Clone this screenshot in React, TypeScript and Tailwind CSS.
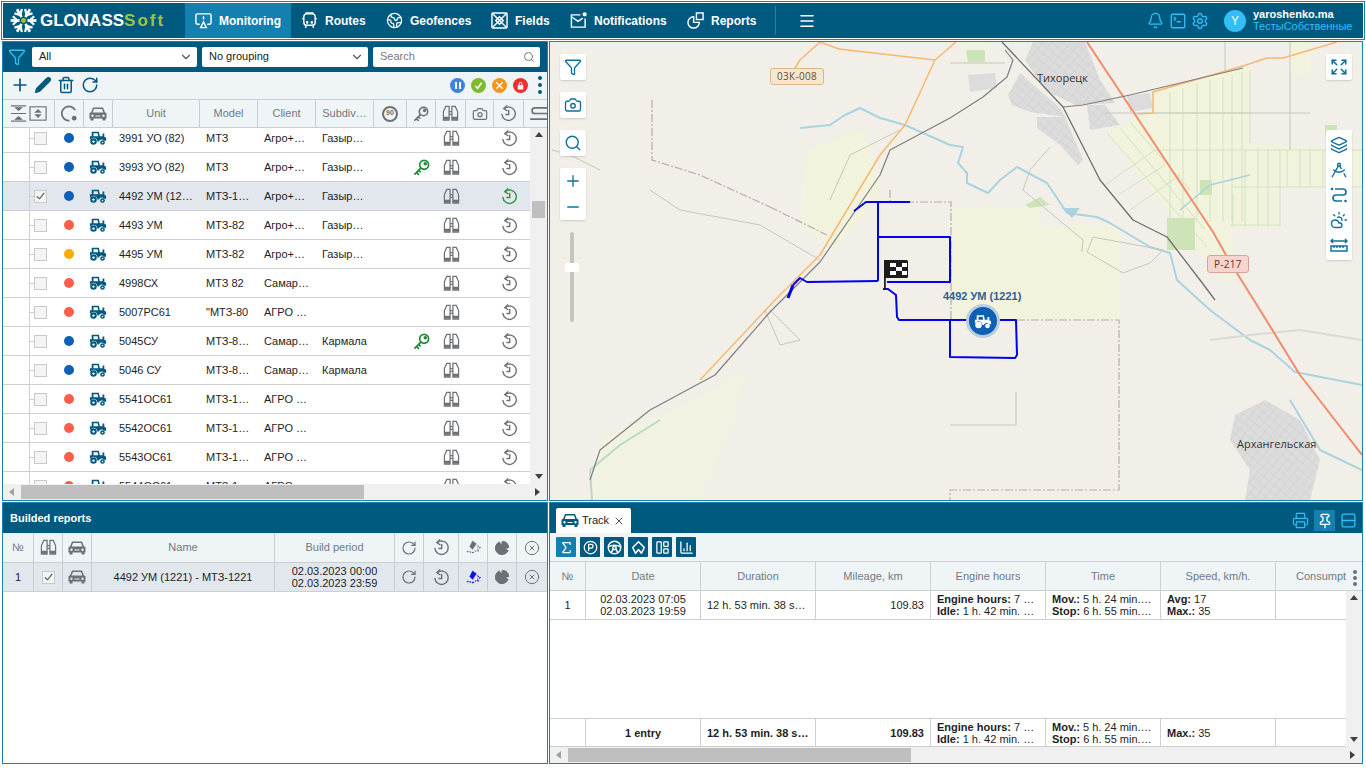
import type { ReactNode } from "react";
import {
  Bell,
  Camera,
  ChartColumn,
  ChartPie,
  ChevronDown,
  CircleParking,
  CircleX,
  CloudSun,
  DraftingCompass,
  Earth,
  Expand,
  Funnel,
  Layers,
  LayoutPanelLeft,
  Menu,
  Minus,
  Pencil,
  Pin,
  Plus,
  Printer,
  RotateCw,
  Rows2,
  Search,
  Settings,
  Sigma,
  SquareTerminal,
  Trash2,
  X,
} from "lucide-react";

const units = [
  { name: "3991 УО (82)", model: "МТЗ", client: "Агро+…", sub: "Газыр…", dot: "bg-[#0f5fb5]" },
  { name: "3993 УО (82)", model: "МТЗ", client: "Агро+…", sub: "Газыр…", dot: "bg-[#0f5fb5]", key: true },
  { name: "4492 УМ (12…", model: "МТЗ-1…", client: "Агро+…", sub: "Газыр…", dot: "bg-[#0f5fb5]", selected: true },
  { name: "4493 УМ", model: "МТЗ-82", client: "Агро+…", sub: "Газыр…", dot: "bg-[#fb5f4a]" },
  { name: "4495 УМ", model: "МТЗ-82", client: "Агро+…", sub: "Газыр…", dot: "bg-[#fbaa00]" },
  { name: "4998СХ", model: "МТЗ 82", client: "Самар…", sub: "", dot: "bg-[#fb5f4a]" },
  { name: "5007РС61", model: "\"МТЗ-80", client: "АГРО …", sub: "", dot: "bg-[#fb5f4a]" },
  { name: "5045СУ", model: "МТЗ-8…", client: "Самар…", sub: "Кармала", dot: "bg-[#0f5fb5]", key: true },
  { name: "5046 СУ", model: "МТЗ-8…", client: "Самар…", sub: "Кармала", dot: "bg-[#0f5fb5]" },
  { name: "5541ОС61", model: "МТЗ-1…", client: "АГРО …", sub: "", dot: "bg-[#fb5f4a]" },
  { name: "5542ОС61", model: "МТЗ-1…", client: "АГРО …", sub: "", dot: "bg-[#fb5f4a]" },
  { name: "5543ОС61", model: "МТЗ-1…", client: "АГРО …", sub: "", dot: "bg-[#fb5f4a]" },
  { name: "5544ОС61", model: "МТЗ-1…", client: "АГРО …", sub: "", dot: "bg-[#fb5f4a]" },
];

function TractorIcon({ className = "" }: { className?: string }) {
  return (
    <svg viewBox="0 0 20 16" className={className} fill="currentColor">
      <path d="M3 1h8l1 5h3V3h2v3.600l2 1.200V11h-2.500a3.200 3.200 0 0 0-5.600 1H9.400a4.200 4.200 0 0 0-7.600-2.400H1V6h2V1zm2 1.600V6h5.200l-.6-3.400H5z" />
      <circle cx="5" cy="12" r="3.600" />
      <circle cx="5" cy="12" r="1.300" fill="#fff" />
      <circle cx="15" cy="13" r="2.600" />
      <circle cx="15" cy="13" r="0.900" fill="#fff" />
    </svg>
  );
}

function BinocularsIcon() {
  return (
    <svg viewBox="0 0 18 18" className="h-[17px] w-[17px] text-[#6d7175]" fill="none" stroke="currentColor" strokeWidth="1.300">
      <path d="M4 1.500h3.500V16H1.500V7z" />
      <path d="M14 1.500h-3.500V16h6V7z" />
      <path d="M7.500 7h3M7.500 10h3" />
      <path d="M1.500 14h6M10.500 14h6" strokeWidth="3" />
    </svg>
  );
}

function KeyIcon({ className }: { className: string }) {
  return (
    <svg viewBox="0 0 18 18" className={className} fill="none" stroke="currentColor" strokeWidth="1.800" strokeLinecap="round">
      <circle cx="11.800" cy="6.200" r="4.700" />
      <circle cx="13" cy="5" r="1" />
      <path d="M8.300 9.700 2 16M3.800 14.200 5.800 16.200M6 12l1.600 1.600" />
    </svg>
  );
}

function HistoryIcon({ className = "text-[#6d7175]" }: { className?: string }) {
  return (
    <svg viewBox="0 0 16 16" className={`h-[17px] w-[17px] ${className}`} fill="none" stroke="currentColor" strokeWidth="1.300" strokeLinecap="round">
      <path d="M4 3.400A6.300 6.300 0 1 1 1.800 8.800" />
      <path d="M6.400 0.800 3.600 3.400 6.600 5.400" />
      <path d="M8.200 5.200V9H5.600" />
    </svg>
  );
}

function CarIcon({ className = "h-[16px] w-[18px] text-[#6d7175]" }: { className?: string }) {
  return (
    <svg viewBox="0 0 18 15" className={className} fill="currentColor">
      <path d="M4 1h10l2 5 1.500.5V12h-1v2h-3v-2H4.500v2h-3v-2h-1V6.500L2 6zm1 1.500L3.700 6h10.600L13 2.500zM3.500 8a1.200 1.200 0 1 0 0 2.400 1.200 1.200 0 0 0 0-2.400zm11 0a1.200 1.200 0 1 0 0 2.400 1.200 1.200 0 0 0 0-2.400zM6.500 9v1h5V9z" fillRule="evenodd" />
    </svg>
  );
}

function WheelIcon({ className }: { className: string }) {
  return (
    <svg viewBox="0 0 18 18" className={className} fill="none" stroke="currentColor" strokeWidth="1.800">
      <circle cx="9" cy="9" r="7.500" />
      <circle cx="9" cy="9.500" r="2" />
      <path d="M2 8c4-2 10-2 14 0M7.500 11 5 15M10.500 11 13 15" />
    </svg>
  );
}

function TurnIcon({ className }: { className: string }) {
  return (
    <svg viewBox="0 0 18 18" className={className} fill="none" stroke="currentColor" strokeWidth="1.800" strokeLinejoin="round">
      <path d="M9 2 16 9l-3.500 7L9 11.500 5.500 16 2 9z" />
    </svg>
  );
}

function Triangle({ dir }: { dir: "up" | "down" | "left" | "right" }) {
  const points = {
    up: "4,1 8,6 0,6",
    down: "0,1 8,1 4,6",
    left: "6,0 6,8 1,4",
    right: "1,0 1,8 6,4",
  };
  return (
    <svg viewBox="0 0 8 8" className="h-2 w-2" fill={dir === "left" ? "#a0a0a0" : "#404040"}>
      <polygon points={points[dir]} />
    </svg>
  );
}

function Check({ checked = false }: { checked?: boolean }) {
  return (
    <span className="flex h-[13px] w-[13px] items-center justify-center border border-[#c9c9c9] bg-[#f4f4f4]">
      {checked && (
        <svg viewBox="0 0 12 12" className="h-3 w-3" fill="none" stroke="#555" strokeWidth="1.200">
          <path d="M2 6.500 5 9l5-6.500" />
        </svg>
      )}
    </span>
  );
}

function Logo() {
  const arms = [30, 90, 150, 210, 270, 330];
  return (
    <div className="flex w-[182px] shrink-0 items-center pl-[7px]">
      <svg viewBox="-12 -12 24 24" className="h-[27px] w-[27px]">
        {arms.map((a) => (
          <g key={a} transform={`rotate(${a})`} stroke="#fff" fill="none">
            <path d="M0-3.500V-11.500" strokeWidth="2.400" />
            <path d="M-3.800-9.500 0-5.500 3.800-9.500" strokeWidth="2" />
          </g>
        ))}
        <circle r="2.200" fill="#9ec43c" />
      </svg>
      <span className="ml-[3px] text-[17px] leading-none font-bold text-white">GLONASS</span>
      <span className="text-[17px] leading-none font-bold tracking-[2px] text-[#9ec43c]">Soft</span>
    </div>
  );
}

function NavItem({ icon, label, active = false, w }: { icon: ReactNode; label: string; active?: boolean; w: string }) {
  return (
    <div className={`flex h-full items-center gap-[7px] pl-[10px] text-[12px] font-bold text-white ${w} ${active ? "bg-[#1480b0]" : ""}`}>
      {icon}
      <span>{label}</span>
    </div>
  );
}

function TopBar() {
  const ic = "h-[17px] w-[17px] shrink-0";
  return (
    <header className="h-[39px] shrink-0 border border-[#1a83ad] p-px">
      <div className="flex h-full bg-[#005a80]">
        <Logo />
        <NavItem w="w-[106px]" active label="Monitoring" icon={
          <svg viewBox="0 0 18 18" className={ic} fill="none" stroke="#fff" strokeWidth="1.500">
            <path d="M5 13H2.500a1.500 1.500 0 0 1-1.500-1.500v-8A1.500 1.500 0 0 1 2.500 2h13A1.500 1.500 0 0 1 17 3.500v8a1.500 1.500 0 0 1-1.500 1.500H13" />
            <path d="M9 4.500V8M6 16.500 9 10.500l3 6z" />
          </svg>
        } />
        <NavItem w="w-[85px]" label="Routes" icon={
          <svg viewBox="0 0 18 18" className={ic} fill="none" stroke="#fff" strokeWidth="1.500">
            <rect x="3" y="2" width="12" height="12" rx="3" />
            <path d="M5.500 2V1h7v1M3 7H1M15 7h2M5 14v3M13 14v3" />
            <circle cx="6.500" cy="11" r=".6" />
            <circle cx="11.500" cy="11" r=".6" />
          </svg>
        } />
        <NavItem w="w-[105px]" label="Geofences" icon={<Earth className={ic} strokeWidth={1.800} />} />
        <NavItem w="w-[79px]" label="Fields" icon={
          <svg viewBox="0 0 18 18" className={ic} fill="none" stroke="#fff" strokeWidth="1.500">
            <rect x="1" y="1" width="16" height="16" rx="1.500" />
            <path d="M1 1l16 16M17 1 1 17M5 9l4-4 4 4-4 4z" />
          </svg>
        } />
        <NavItem w="w-[117px]" label="Notifications" icon={
          <svg viewBox="0 0 18 18" className={ic} fill="none" stroke="#fff" strokeWidth="1.500">
            <path d="M11 3H1.500v13h14.500V7" />
            <path d="m1.500 5 7 5 5-3.500" />
            <circle cx="15.500" cy="2.500" r="1.500" fill="#fff" />
          </svg>
        } />
        <NavItem w="w-[88px]" label="Reports" icon={
          <svg viewBox="0 0 18 18" className={ic} fill="none" stroke="#fff" strokeWidth="1.500">
            <path d="M7 5a6 6 0 1 0 6 6H7z" />
            <rect x="10" y="1" width="7" height="7" />
          </svg>
        } />
        <div className="my-[3px] ml-[10px] w-px bg-[#1a83ad]" />
        <div className="ml-[22px] flex items-center">
          <Menu className="h-[18px] w-[18px] text-white" strokeWidth={2} />
        </div>
        <div className="ml-auto flex items-center text-[#33bff5]">
          <Bell className="h-[17px] w-[17px]" strokeWidth={1.800} />
          <SquareTerminal className="ml-[5px] h-[18px] w-[18px]" strokeWidth={1.800} />
          <Settings className="ml-[4px] h-[18px] w-[18px]" strokeWidth={1.800} />
          <span className="ml-[15px] flex h-[22px] w-[22px] items-center justify-center rounded-full bg-[#33bff5] text-[12px] text-white">Y</span>
          <div className="-mt-[2px] ml-[7px] mr-[10px] w-[100px] text-[11px] leading-[12px]">
            <div className="font-bold text-white">yaroshenko.ma</div>
            <div>ТестыСобственные</div>
          </div>
        </div>
      </div>
    </header>
  );
}

function SelectBox({ label, w }: { label: string; w: string }) {
  return (
    <div className={`flex h-[20px] items-center justify-between rounded-[2px] bg-white pl-[7px] pr-[4px] text-[11px] text-[#222] ${w}`}>
      <span>{label}</span>
      <ChevronDown className="h-[14px] w-[14px] text-[#555]" />
    </div>
  );
}

function HeaderCell({ children, w }: { children: ReactNode; w: string }) {
  return (
    <div className={`flex h-full shrink-0 items-center justify-center border-r border-[#c9ced2] text-[11px] text-[#6f7b82] ${w}`}>
      {children}
    </div>
  );
}

function ScrollBarH({ thumb }: { thumb: string }) {
  return (
    <div className="flex h-[16px] shrink-0 items-center bg-[#f0f0f0]">
      <span className="flex w-[18px] justify-center"><Triangle dir="left" /></span>
      <div className={`h-[14px] bg-[#bfbfbf] ${thumb}`} />
      <span className="ml-auto flex w-[18px] justify-center"><Triangle dir="right" /></span>
    </div>
  );
}

function UnitRow({ unit, first }: { unit: (typeof units)[number]; first: boolean }) {
  return (
    <div className={`flex h-[29px] shrink-0 items-center border-b border-[#cfcfcf] text-[11px] text-[#1e1e1e] ${unit.selected ? "bg-[#e2e7ee]" : "bg-white"} ${first ? "-mt-[4px]" : ""}`}>
      <div className="h-full w-[27px] shrink-0 border-r border-[#cfcfcf]" />
      <div className="flex w-[24px] shrink-0 items-center">
        <span className="h-px w-[4px] bg-[#cfcfcf]" />
        <Check checked={unit.selected} />
      </div>
      <div className="flex w-[29px] shrink-0 justify-center">
        <span className={`h-[10px] w-[10px] rounded-full ${unit.dot}`} />
      </div>
      <div className="flex w-[29px] shrink-0 justify-center">
        <TractorIcon className="h-[16px] w-[18px] text-[#005a80]" />
      </div>
      <div className="w-[88px] shrink-0 pl-[7px]">{unit.name}</div>
      <div className="w-[58px] shrink-0 pl-[6px]">{unit.model}</div>
      <div className="w-[58px] shrink-0 pl-[6px]">{unit.client}</div>
      <div className="w-[58px] shrink-0 pl-[6px]">{unit.sub}</div>
      <div className="w-[33px] shrink-0" />
      <div className="flex w-[29px] shrink-0 justify-center">
        {unit.key && <KeyIcon className="h-[17px] w-[17px] text-[#1f8a3a]" />}
      </div>
      <div className="flex w-[30px] shrink-0 justify-center"><BinocularsIcon /></div>
      <div className="w-[28px] shrink-0" />
      <div className="flex w-[30px] shrink-0 justify-center">
        <HistoryIcon className={unit.selected ? "text-[#2d9140]" : "text-[#6d7175]"} />
      </div>
    </div>
  );
}

function UnitsPanel() {
  return (
    <section className="flex h-[460px] w-[546px] shrink-0 flex-col border border-[#1a83ad]">
      <div className="flex h-[30px] shrink-0 items-center gap-[5px] bg-[#005a80] px-[5px] pb-px">
        <Funnel className="h-[18px] w-[18px] text-[#33bff5]" strokeWidth={1.700} />
        <SelectBox label="All" w="ml-[1px] w-[165px]" />
        <SelectBox label="No grouping" w="w-[166px]" />
        <div className="flex h-[20px] w-[167px] items-center justify-between rounded-[2px] bg-white pl-[7px] pr-[5px] text-[11px] text-[#7a7a7a]">
          <span>Search</span>
          <Search className="h-[12px] w-[12px] text-[#777]" />
        </div>
      </div>
      <div className="flex h-[28px] shrink-0 items-center border-b border-[#c9ced2] bg-[#eff4f7] pb-px pl-[7px] text-[#005a80]">
        <Plus className="h-[20px] w-[20px]" strokeWidth={2} />
        <Pencil className="ml-[4px] h-[18px] w-[18px] fill-[#005a80]" strokeWidth={1.500} />
        <Trash2 className="ml-[5px] h-[18px] w-[18px]" strokeWidth={2} />
        <RotateCw className="ml-[6px] h-[18px] w-[18px]" strokeWidth={2} />
        <div className="ml-auto flex items-center gap-[6px] pr-[5px]">
          <span className="flex h-[15px] w-[15px] items-center justify-center gap-[2px] rounded-full bg-[#3f83e0]">
            <i className="h-[7px] w-[2px] bg-white" /><i className="h-[7px] w-[2px] bg-white" />
          </span>
          <span className="flex h-[15px] w-[15px] items-center justify-center rounded-full bg-[#7ebd29]">
            <svg viewBox="0 0 10 10" className="h-[9px] w-[9px]" fill="none" stroke="#fff" strokeWidth="1.800"><path d="M1.500 5.500 4 8l4.500-6" /></svg>
          </span>
          <span className="flex h-[15px] w-[15px] items-center justify-center rounded-full bg-[#f7931e] text-white">
            <X className="h-[11px] w-[11px]" strokeWidth={3} />
          </span>
          <span className="flex h-[15px] w-[15px] items-center justify-center rounded-full bg-[#ef2f2f]">
            <svg viewBox="0 0 10 10" className="h-[9px] w-[9px]" fill="#fff"><path d="M2 4.500h6V9.500H2zM3 4.500V3a2 2 0 0 1 4 0v1.500H6V3a1 1 0 0 0-2 0v1.500z" /></svg>
          </span>
          <span className="ml-[4px] flex flex-col gap-[3px]">
            <i className="h-[4px] w-[4px] rounded-full bg-[#005a80]" />
            <i className="h-[4px] w-[4px] rounded-full bg-[#005a80]" />
            <i className="h-[4px] w-[4px] rounded-full bg-[#005a80]" />
          </span>
        </div>
      </div>
      <div className="flex h-[28px] shrink-0 items-center border-b border-[#c9ced2] bg-[#eff4f7]">
        <HeaderCell w="w-[52px]">
          <svg viewBox="0 0 40 20" className="h-[19px] w-[40px]" fill="none" stroke="#6d7175" strokeWidth="1.200">
            <path d="M1 2h16M1 18h16M1 10h16" />
            <path d="m6 4 3 2.500L12 4zM6 16l3-2.500L12 16z" fill="#6d7175" />
            <rect x="21" y="3" width="17" height="14" />
            <path d="m27 8.500 2.500-2.500L32 8.500zM27 11.500l2.500 2.500 2.500-2.500z" fill="#6d7175" />
          </svg>
        </HeaderCell>
        <HeaderCell w="w-[29px]">
          <svg viewBox="0 0 18 18" className="h-[17px] w-[17px]" fill="none" stroke="#6d7175" strokeWidth="1.800">
            <path d="M15 5.500A7.500 7.500 0 1 0 9 16.500" />
            <circle cx="14" cy="14" r="2.500" fill="#6d7175" stroke="none" />
          </svg>
        </HeaderCell>
        <HeaderCell w="w-[29px]"><CarIcon /></HeaderCell>
        <HeaderCell w="w-[87px]">Unit</HeaderCell>
        <HeaderCell w="w-[58px]">Model</HeaderCell>
        <HeaderCell w="w-[58px]">Client</HeaderCell>
        <HeaderCell w="w-[58px]">Subdiv…</HeaderCell>
        <HeaderCell w="w-[33px]">
          <span className="flex h-[16px] w-[16px] items-center justify-center rounded-full border-2 border-[#6d7175] text-[7px] font-bold text-[#6d7175]">90</span>
        </HeaderCell>
        <HeaderCell w="w-[29px]"><KeyIcon className="h-[16px] w-[16px] text-[#6d7175]" /></HeaderCell>
        <HeaderCell w="w-[30px]"><BinocularsIcon /></HeaderCell>
        <HeaderCell w="w-[28px]"><Camera className="h-[16px] w-[16px] text-[#6d7175]" strokeWidth={1.800} /></HeaderCell>
        <HeaderCell w="w-[30px]"><HistoryIcon /></HeaderCell>
        <div className="flex h-full grow items-center overflow-hidden pl-[5px]">
          <svg viewBox="0 0 24 16" className="h-[15px] w-[23px] shrink-0" fill="none" stroke="#6d7175" strokeWidth="1.800">
            <path d="M23 2H6a3 3 0 0 0 0 6h12a3 3 0 0 1 0 6H1" />
          </svg>
        </div>
      </div>
      <div className="flex min-h-0 grow">
        <div className="flex min-w-0 grow flex-col overflow-hidden">
          {units.map((u, i) => (
            <UnitRow key={u.name} unit={u} first={i === 0} />
          ))}
        </div>
        <div className="flex w-[17px] shrink-0 flex-col items-center bg-[#f0f0f0]">
          <span className="flex h-[14px] items-center"><Triangle dir="up" /></span>
          <div className="mt-[59px] h-[17px] w-[13px] bg-[#bfbfbf]" />
          <span className="mt-auto flex h-[14px] items-center"><Triangle dir="down" /></span>
        </div>
      </div>
      <ScrollBarH thumb="w-[343px]" />
    </section>
  );
}

function ReportsPanel() {
  const icon = "h-[16px] w-[16px] text-[#6d7175]";
  const cols = ["w-[31px]", "w-[29px]", "w-[29px]", "w-[183px]", "w-[120px]", "w-[29px]", "w-[35px]", "w-[29px]", "w-[29px]", "w-[29px]"];
  const Pie = <ChartPie className={`${icon} fill-[#6d7175]`} strokeWidth={1.500} />;
  const Cross = <CircleX className={icon} strokeWidth={1.500} />;
  const Refresh = <RotateCw className={icon} strokeWidth={1.800} />;
  const trackIcon = (color: string) => (
    <svg viewBox="0 0 18 18" className={`h-[17px] w-[17px] ${color}`} fill="currentColor" stroke="currentColor">
      <path d="m8 2 4 3-4 6-3-3z" strokeWidth=".5" />
      <path d="M2 14c3-3 4 2 7 0s3-2 7-1M13 7l3 2-3 2" fill="none" strokeWidth="1.200" strokeDasharray="2 1" />
    </svg>
  );
  return (
    <section className="flex min-h-0 w-[546px] shrink-0 flex-col border border-[#1a83ad] bg-white">
      <div className="flex h-[30px] shrink-0 items-center bg-[#005a80] pl-[7px] text-[11px] font-bold text-white">Builded reports</div>
      <div className="flex h-[30px] shrink-0 border-b border-[#c9ced2] bg-[#eff4f7]">
        <HeaderCell w={cols[0]}>№</HeaderCell>
        <HeaderCell w={cols[1]}><BinocularsIcon /></HeaderCell>
        <HeaderCell w={cols[2]}><CarIcon /></HeaderCell>
        <HeaderCell w={cols[3]}>Name</HeaderCell>
        <HeaderCell w={cols[4]}>Build period</HeaderCell>
        <HeaderCell w={cols[5]}>{Refresh}</HeaderCell>
        <HeaderCell w={cols[6]}><HistoryIcon /></HeaderCell>
        <HeaderCell w={cols[7]}>{trackIcon("text-[#6d7175]")}</HeaderCell>
        <HeaderCell w={cols[8]}>{Pie}</HeaderCell>
        <div className={`flex items-center justify-center ${cols[9]}`}>{Cross}</div>
      </div>
      <div className="flex h-[29px] shrink-0 items-center border-b border-[#cfcfcf] bg-[#e2e7ee] text-[11px] leading-[12px] text-[#1e1e1e]">
        <HeaderCell w={cols[0]}><span className="text-[#1e1e1e]">1</span></HeaderCell>
        <HeaderCell w={cols[1]}><Check checked /></HeaderCell>
        <HeaderCell w={cols[2]}><CarIcon /></HeaderCell>
        <HeaderCell w={cols[3]}><span className="text-[#1e1e1e]">4492 УМ (1221) - МТЗ-1221</span></HeaderCell>
        <HeaderCell w={cols[4]}>
          <span className="text-center text-[#1e1e1e]">02.03.2023 00:00<br />02.03.2023 23:59</span>
        </HeaderCell>
        <HeaderCell w={cols[5]}>{Refresh}</HeaderCell>
        <HeaderCell w={cols[6]}><HistoryIcon /></HeaderCell>
        <HeaderCell w={cols[7]}>{trackIcon("text-[#1010e0]")}</HeaderCell>
        <HeaderCell w={cols[8]}>{Pie}</HeaderCell>
        <div className={`flex items-center justify-center ${cols[9]}`}>{Cross}</div>
      </div>
    </section>
  );
}

function MapButton({ children }: { children: ReactNode }) {
  return (
    <div className="flex h-[26px] w-[26px] items-center justify-center rounded-[2px] bg-white text-[#0f6f9e] shadow-[0_1px_2px_rgba(0,0,0,0.15)]">
      {children}
    </div>
  );
}

function MapDrawing() {
  return (
    <svg viewBox="550 42 812 458" className="absolute inset-0 h-full w-full">
      <defs>
        <pattern id="city" width="7" height="7" patternUnits="userSpaceOnUse" patternTransform="rotate(40)">
          <rect width="7" height="7" fill="#dcdcdc" />
          <path d="M0 0h7M0 0v7" stroke="#c8c8c8" strokeWidth=".7" />
        </pattern>
      </defs>
      <rect x="550" y="42" width="812" height="458" fill="#f2efe9" />
      {/* fields */}
      <g fill="#f1f3dd">
        <path d="M1153 90 1250 65V143L1362 150V187H1280V227H1232L1240 280H1222L1107 133 1153 110z" />
        <path d="M805 150 865 128 882 190 835 250 800 225z" />
        <path d="M952 207H1040V225H1120V320H952z" />
        <path d="M600 440 700 395 745 370 735 420 700 500H590z" fillOpacity=".7" />
        <path d="M1290 42H1310V70H1290z" />
        <path d="M1290 60 1310 60V78H1290z" fillOpacity=".6" />
        <path d="M960 42H990L985 70 965 60z" fillOpacity=".6" />
      </g>
      <g fill="#cfe3b9">
        <path d="M966 50H985V62H968z" />
        <path d="M1025 205 1040 197 1050 205 1030 208z" />
        <path d="M1167 218H1195V250H1167z" />
        <path d="M1200 180H1212V195H1200z" />
        <path d="M1325 125H1337V135H1325z" />
      </g>
      {/* field grid */}
      <path
        d="M1170 92V222M1183 88V222M1197 84V222M1210 80V222M1223 77V222M1232 75V222M1242 72V222M1250 70V143M1153 113H1250M1153 150H1362M1233 187H1362M1233 193V227M1245 150V227M1258 150V227M1268 150V227M1280 150V227M1287 150V187M1300 150V187M1310 150V187M1323 150V187M1336 150V187M1350 150V187M1107 133 1207 247M1120 128 1205 230M1130 122 1190 190M1105 185 1155 150M1118 195 1165 165M1130 210 1180 175M1230 225H1280"
        stroke="#d3e3bd"
        strokeWidth="1"
        fill="none"
      />
      {/* cities */}
      <path d="M1033 42H1085L1100 80 1115 103 1075 105 1045 90 1025 60z" fill="url(#city)" />
      <path d="M1008 95 1020 73 1060 108 1065 117 1030 112 1012 105z" fill="url(#city)" />
      <path d="M1037 117 1065 117 1083 160 1078 165 1060 145 1037 128z" fill="url(#city)" />
      <path d="M1087 105H1105L1120 125 1090 130z" fill="url(#city)" />
      <path d="M968 75 995 73 997 88 970 92z" fill="#dcdcdc" />
      <path d="M1127 96 1150 93 1153 108 1130 112z" fill="#dcdcdc" />
      <path d="M1235 415 1265 400 1300 420 1320 460 1310 500H1245L1250 470 1230 440z" fill="url(#city)" />
      {/* rivers */}
      <g fill="none" stroke="#aad3df" strokeWidth="2" strokeLinejoin="round">
        <path d="M800 128 830 125 845 115 860 108 880 118 905 125 950 145 963 147 958 163 967 173 967 183 988 193 1000 180 1017 167 1047 183 1067 213 1097 217 1110 223 1150 247 1170 253 1177 280 1210 310 1250 340 1270 350 1295 372 1362 385" />
        <path d="M592 500 590 470 620 445 660 420" stroke="#b8dcc0" />
        <path d="M1290 400 1320 450 1362 470" />
        <path d="M1180 210 1210 185 1250 175" strokeWidth="1.500" />
      </g>
      <path d="M1062 208 1080 208 1072 218z" fill="#aad3df" />
      {/* minor roads */}
      <g fill="none" stroke="#c9c6c0" strokeWidth="1">
        <path d="M950 63H1005M1105 113H1310M1290 42V150M1225 42V72" />
        <path d="M1050 147 1030 170 1023 190 1083 240 1082 252M1093 237 1163 250 1150 263 1123 273 1087 252z" />
        <path d="M820 260 760 225 680 210 650 190M770 310 800 340 780 345 765 310" />
        <path d="M600 170 570 155 552 150M900 130 850 155 830 200" />
        <path d="M1016 392V425H950" />
        <path d="M1210 340 1250 335 1300 330 1362 340" stroke="#dcdad4" strokeWidth="2" />
      </g>
      {/* boundaries */}
      <g fill="none" stroke="#b9a9b9" strokeWidth="1.200" strokeDasharray="8 2 2 2">
        <path d="M890 190V202H951V320" />
        <path d="M1017 320H1119V490H950V500" />
        <path d="M770 207 827 235M652 100V160L700 175 770 207" />
      </g>
      {/* roads */}
      <g fill="none" strokeLinejoin="round">
        <path d="M1087 42 1213 232 1230 262 1260 310 1300 375 1362 455" stroke="#f08d6e" strokeWidth="2" />
        <path d="M1337 42 1283 58 1267 58 1243 66 1153 92V113L1137 114" stroke="#f8b870" strokeWidth="1.500" />
        <path d="M956 42 935 60 839 49 820 42 800 60 790 76M935 60 905 125 880 155 838 225 820 255 790 285 775 300 700 380" stroke="#f8b870" strokeWidth="1.500" />
        <path d="M1243 68 1130 95 1083 105 1063 107" stroke="#7f7f7f" strokeWidth="1.200" />
        <path d="M1002 42 1063 107 1100 180 1133 220 1167 237 1200 280 1215 300" stroke="#6f6f6f" strokeWidth="1.300" />
        <path d="M1005 50 1013 60 1007 77 983 97 950 118 890 150 880 175 820 262 770 312 715 375 650 410 600 450 590 480" stroke="#7f7f7f" strokeWidth="1.200" />
      </g>
      {/* track */}
      <g fill="none" stroke="#0000ee" strokeWidth="2" strokeLinejoin="round">
        <path d="M854 211 866 202H878L910 202" />
        <path d="M878 202V281" />
        <path d="M879 237H950V282H887" />
        <path d="M878 281 807 282 800 278 793 285" />
        <path d="M793 285 788 298" strokeWidth="3" />
        <path d="M883 289H888L896 295 897 317 899 320H1016L1017 355 1015 358 950 357V320" />
      </g>
      {/* finish flag */}
      <rect x="884" y="260" width="1.800" height="30" fill="#222" />
      <rect x="884" y="260" width="24" height="18" rx="1.500" fill="#1c1c1c" />
      <g fill="#fff">
        <rect x="890" y="263" width="6" height="4" />
        <rect x="902" y="263" width="5" height="4" />
        <rect x="896" y="267" width="6" height="4" />
        <rect x="890" y="271" width="6" height="4" />
        <rect x="902" y="271" width="5" height="4" />
      </g>
    </svg>
  );
}

function MapPanel() {
  return (
    <section className="h-[460px] grow border border-[#1a83ad]">
      <div className="relative h-full w-full overflow-hidden bg-[#f2efe9]">
        <MapDrawing />
        {/* labels and markers */}
        <span className="absolute left-[220px] top-[26px] rounded-[3px] border border-[#d8b98a] bg-[#f7e7cf] px-[6px] text-[10px] leading-[15px] tracking-[0.3px] text-[#6b4b2a] [font-family:'Open_Sans',sans-serif]">03К-008</span>
        <span className="absolute left-[487px] top-[28px] text-[11px] text-[#333] [font-family:'Open_Sans',sans-serif]">Тихорецк</span>
        <span className="absolute left-[657px] top-[213px] rounded-[3px] border border-[#d9a39a] bg-[#f6d5ce] px-[6px] text-[10px] leading-[16px] tracking-[0.3px] text-[#6b2f28] [font-family:'Open_Sans',sans-serif]">Р-217</span>
        <span className="absolute left-[687px] top-[394px] text-[11px] text-[#333] [font-family:'Open_Sans',sans-serif]">Архангельская</span>
        <span className="absolute left-[393px] top-[246px] text-[11px] font-bold text-[#2e5f96]">4492 УМ (1221)</span>
        <span className="absolute left-[416px] top-[262px] flex h-[34px] w-[34px] items-center justify-center rounded-full border-[3px] border-[#b9cfe0] bg-[#0f5fb5]">
          <TractorIcon className="h-[15px] w-[18px] text-white" />
        </span>
        {/* left controls */}
        <div className="absolute left-[10px] top-[12px] flex flex-col items-start gap-[12px]">
          <MapButton><Funnel className="h-[18px] w-[18px]" strokeWidth={1.800} /></MapButton>
          <MapButton><Camera className="h-[18px] w-[18px]" strokeWidth={1.800} /></MapButton>
          <MapButton><Search className="h-[18px] w-[18px]" strokeWidth={1.800} /></MapButton>
          <div className="flex h-[52px] w-[26px] flex-col items-center justify-around rounded-[2px] bg-white text-[#0f6f9e] shadow-[0_1px_2px_rgba(0,0,0,0.15)]">
            <Plus className="h-[18px] w-[18px]" strokeWidth={1.800} />
            <Minus className="h-[18px] w-[18px]" strokeWidth={1.800} />
          </div>
          <div className="relative ml-[10px] h-[90px] w-[4px] rounded-full bg-[#c4c4c0]">
            <span className="absolute left-[-5px] top-[31px] h-[9px] w-[14px] rounded-[2px] bg-white" />
          </div>
        </div>
        {/* right controls */}
        <div className="absolute right-[10px] top-[12px] flex flex-col items-center gap-[50px]">
          <MapButton><Expand className="h-[18px] w-[18px]" strokeWidth={2} /></MapButton>
          <div className="flex h-[130px] w-[26px] flex-col items-center justify-around rounded-[2px] bg-white py-[2px] text-[#0f6f9e] shadow-[0_1px_2px_rgba(0,0,0,0.15)]">
            <Layers className="h-[18px] w-[18px]" strokeWidth={1.800} />
            <DraftingCompass className="h-[18px] w-[18px]" strokeWidth={1.800} />
            <svg viewBox="0 0 18 18" className="h-[18px] w-[18px]" fill="none" stroke="currentColor" strokeWidth="1.600">
              <path d="M5 3h8a2.500 2.500 0 0 1 0 6H6a2.500 2.500 0 0 0 0 6h6" />
              <circle cx="2" cy="3" r="1.300" fill="currentColor" stroke="none" />
              <circle cx="15.500" cy="15" r="1.300" fill="currentColor" stroke="none" />
            </svg>
            <CloudSun className="h-[18px] w-[18px]" strokeWidth={1.800} />
            <svg viewBox="0 0 18 18" className="h-[18px] w-[18px]" fill="none" stroke="currentColor" strokeWidth="1.500">
              <path d="M1 5h16M3 3 1 5l2 2M15 3l2 2-2 2" />
              <rect x="1" y="10" width="16" height="5" />
              <path d="M4 10v2M7 10v2M10 10v2M13 10v2" />
            </svg>
          </div>
        </div>
      </div>
    </section>
  );
}

const trackCols = ["w-[36px]", "w-[115px]", "w-[115px]", "w-[115px]", "w-[115px]", "w-[115px]", "w-[115px]"];

function TrackCell({ w, className = "", children }: { w: string; className?: string; children?: ReactNode }) {
  return <div className={`flex h-full shrink-0 items-center border-r border-[#cfcfcf] px-[6px] ${w} ${className}`}>{children}</div>;
}

function TrackPanel() {
  const toolbar = [Sigma, CircleParking, WheelIcon, TurnIcon, LayoutPanelLeft, ChartColumn];
  return (
    <section className="flex min-h-0 grow flex-col border border-[#1a83ad] bg-white">
      <div className="flex h-[30px] shrink-0 items-end justify-between bg-[#005a80] pl-[6px] pr-[5px]">
        <div className="flex h-[25px] w-[75px] items-center rounded-t-[2px] bg-white pl-[5px] text-[11px] text-[#222]">
          <CarIcon className="h-[15px] w-[18px] text-[#005a80]" />
          <span className="ml-[3px]">Track</span>
          <X className="ml-[4px] h-[12px] w-[12px] text-[#555]" strokeWidth={2} />
        </div>
        <div className="mb-[2px] flex items-center gap-[2px] text-[#33bff5]">
          <Printer className="h-[17px] w-[17px]" strokeWidth={1.600} />
          <span className="ml-[3px] flex h-[21px] w-[21px] items-center justify-center bg-[#1480b0] text-white">
            <Pin className="h-[16px] w-[16px]" strokeWidth={2} />
          </span>
          <Rows2 className="ml-[3px] h-[17px] w-[17px]" strokeWidth={1.800} />
        </div>
      </div>
      <div className="flex h-[29px] shrink-0 items-center gap-[4px] border-b border-[#cfcfcf] bg-[#eff4f7] pl-[6px]">
        {toolbar.map((Icon, i) => (
          <span key={i} className={`flex h-[20px] w-[20px] items-center justify-center rounded-[1px] text-white ${i === 0 ? "bg-[#1480b0]" : "bg-[#005a80]"}`}>
            <Icon className="h-[15px] w-[15px]" />
          </span>
        ))}
      </div>
      <div className="relative flex h-[29px] shrink-0 border-b border-[#cfcfcf] bg-[#eff4f7] text-[11px] text-[#6f7b82]">
        {["№", "Date", "Duration", "Mileage, km", "Engine hours", "Time", "Speed, km/h."].map((t, i) => (
          <TrackCell key={t} w={trackCols[i]} className="justify-center">{t}</TrackCell>
        ))}
        <div className="flex items-center pl-[20px]">Consumpt</div>
        <span className="absolute right-[5px] top-[8px] flex flex-col gap-[2px]">
          <i className="h-[4px] w-[4px] rounded-full bg-[#6d7175]" />
          <i className="h-[4px] w-[4px] rounded-full bg-[#6d7175]" />
          <i className="h-[4px] w-[4px] rounded-full bg-[#6d7175]" />
        </span>
      </div>
      <div className="flex min-h-0 grow">
        <div className="flex min-w-0 grow flex-col text-[11px] leading-[12px] text-[#1e1e1e]">
          <div className="flex h-[29px] shrink-0 border-b border-[#cfcfcf]">
            <TrackCell w={trackCols[0]} className="justify-center">1</TrackCell>
            <TrackCell w={trackCols[1]} className="justify-center text-center">02.03.2023 07:05<br />02.03.2023 19:59</TrackCell>
            <TrackCell w={trackCols[2]}>12 h. 53 min. 38 s…</TrackCell>
            <TrackCell w={trackCols[3]} className="justify-end">109.83</TrackCell>
            <TrackCell w={trackCols[4]}><span><b>Engine hours:</b> 7 …<br /><b>Idle:</b> 1 h. 42 min. …</span></TrackCell>
            <TrackCell w={trackCols[5]}><span><b>Mov.:</b> 5 h. 24 min.…<br /><b>Stop:</b> 6 h. 55 min.…</span></TrackCell>
            <TrackCell w={trackCols[6]}><span><b>Avg:</b> 17<br /><b>Max.:</b> 35</span></TrackCell>
            <div className="grow" />
          </div>
          <div className="grow" />
          <div className="flex h-[29px] shrink-0 border-y border-[#cfcfcf]">
            <TrackCell w={trackCols[0]} />
            <TrackCell w={trackCols[1]} className="justify-center font-bold">1 entry</TrackCell>
            <TrackCell w={trackCols[2]} className="font-bold">12 h. 53 min. 38 s…</TrackCell>
            <TrackCell w={trackCols[3]} className="justify-end font-bold">109.83</TrackCell>
            <TrackCell w={trackCols[4]}><span><b>Engine hours:</b> 7 …<br /><b>Idle:</b> 1 h. 42 min. …</span></TrackCell>
            <TrackCell w={trackCols[5]}><span><b>Mov.:</b> 5 h. 24 min.…<br /><b>Stop:</b> 6 h. 55 min.…</span></TrackCell>
            <TrackCell w={trackCols[6]}><b>Max.:</b>&nbsp;35</TrackCell>
            <div className="grow" />
          </div>
        </div>
        <div className="flex w-[16px] shrink-0 flex-col items-center justify-between bg-[#f0f0f0] py-[3px]">
          <Triangle dir="up" />
          <Triangle dir="down" />
        </div>
      </div>
      <ScrollBarH thumb="w-[343px]" />
    </section>
  );
}

export default function App() {
  return (
    <div className="flex h-[768px] w-[1366px] flex-col gap-px overflow-hidden bg-white p-px text-[11px] [font-family:'Liberation_Sans',Arial,sans-serif]">
      <TopBar />
      <div className="flex min-h-0 grow flex-col gap-px pl-px pr-[2px] pb-[3px]">
        <div className="flex gap-px">
          <UnitsPanel />
          <MapPanel />
        </div>
        <div className="flex min-h-0 grow gap-px">
          <ReportsPanel />
          <TrackPanel />
        </div>
      </div>
    </div>
  );
}
